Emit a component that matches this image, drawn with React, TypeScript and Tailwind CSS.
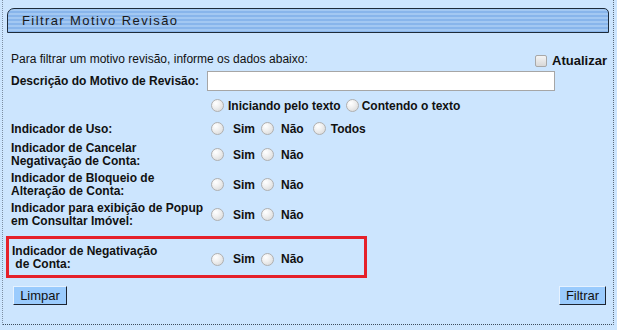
import React from "react";

function Radio({ className = "" }: { className?: string }) {
  return (
    <span
      className={
        "block w-[13px] h-[13px] rounded-full border border-[#b0b0b0] bg-[radial-gradient(circle_at_35%_30%,#ffffff_0%,#f0f0f0_40%,#d4d4d4_100%)] shrink-0 " +
        className
      }
    />
  );
}

function SimNao({ todos }: { todos?: boolean }) {
  return (
    <div className="flex items-center pl-[4px]">
      <Radio />
      <span className="ml-[9px] font-bold">Sim</span>
      <Radio className="ml-[6px]" />
      <span className="ml-[7px] font-bold">Não</span>
      {todos && (
        <>
          <Radio className="ml-[9px]" />
          <span className="ml-[5px] font-bold">Todos</span>
        </>
      )}
    </div>
  );
}

export default function App() {
  return (
    <div
      className="w-[617px] h-[330px] bg-[#cce5fe] text-[12px] text-[#111] overflow-hidden"
      style={{ fontFamily: '"Liberation Sans", Arial, sans-serif' }}
    >
      <div className="ml-[2px] w-[612px] h-[325px] border-l border-dotted border-l-[#7d8fa3] border-r border-r-[#5b6b7b] border-b border-b-[#3d4d5d]">
        <div className="pt-[8px] pl-[4px] pr-[4px]">
          <div className="h-[25px] border border-[#1d2b3a] rounded-tl-[7px] rounded-tr-[5px] bg-[repeating-linear-gradient(to_bottom,#a3c8f2_0px,#a3c8f2_2px,#88b5eb_2px,#88b5eb_4px)] flex items-center pl-[14px]">
            <span className="text-[13px] tracking-[1.4px] text-[#1a1a1a]">Filtrar Motivo Revisão</span>
          </div>
        </div>

        <div className="pl-[8px] pr-[6px]">
          <div className="mt-[18px] flex items-start justify-between h-[20px]">
            <span className="leading-[16px]">Para filtrar um motivo revisão, informe os dados abaixo:</span>
            <span className="mt-[2px] flex items-center leading-[16px]">
              <span className="block w-[12px] h-[12px] rounded-[2px] border border-[#a8a8a8] bg-[linear-gradient(#f4f4f4,#d8d8d8)]" />
              <span className="ml-[5px] font-bold text-[13px]">Atualizar</span>
            </span>
          </div>

          <div className="flex items-center h-[20px]">
            <div className="w-[196px] font-bold">Descrição do Motivo de Revisão:</div>
            <div className="w-[348px] h-[20px] border border-[#a6a6a6] bg-white" />
          </div>

          <div className="flex items-center h-[26px] pt-[3px]">
            <div className="w-[196px]" />
            <div className="flex items-center pl-[4px] font-bold">
              <Radio />
              <span className="ml-[4px]">Iniciando pelo texto</span>
              <Radio className="ml-[5px]" />
              <span className="ml-[3px]">Contendo o texto</span>
            </div>
          </div>

          <div className="flex items-center h-[22px] pt-[1px]">
            <div className="w-[196px] font-bold">Indicador de Uso:</div>
            <SimNao todos />
          </div>

          <div className="flex items-center h-[30px] pt-[1px]">
            <div className="w-[196px] font-bold leading-[13px]">
              Indicador de Cancelar
              <br />
              Negativação de Conta:
            </div>
            <SimNao />
          </div>

          <div className="flex items-center h-[31px]">
            <div className="w-[196px] font-bold leading-[13px]">
              Indicador de Bloqueio de
              <br />
              Alteração de Conta:
            </div>
            <SimNao />
          </div>

          <div className="flex items-center h-[29px]">
            <div className="w-[196px] font-bold leading-[13px]">
              Indicador para exibição de Popup
              <br />
              em Consultar Imóvel:
            </div>
            <SimNao />
          </div>
        </div>

        <div className="ml-[3px] mt-[7px] w-[361px] h-[42px] border-[3px] border-[#e5202a] flex items-center pl-[3px]">
          <div className="w-[195px] font-bold leading-[13px] pt-[1px]">
            Indicador de Negativação
            <br />
            &nbsp;de Conta:
          </div>
          <div className="pt-[4px]">
            <SimNao />
          </div>
        </div>

        <div className="mt-[8px] flex justify-between pl-[10px] pr-[7px]">
          <button className="w-[54px] h-[19px] bg-[#9acbfd] border border-t-[#e6f2ff] border-l-[#e6f2ff] border-r-[#1c2430] border-b-[#1c2430] text-[13px] leading-[17px] text-[#111]">
            Limpar
          </button>
          <button className="w-[47px] h-[19px] bg-[#9acbfd] border border-t-[#e6f2ff] border-l-[#e6f2ff] border-r-[#1c2430] border-b-[#1c2430] text-[13px] leading-[17px] text-[#111]">
            Filtrar
          </button>
        </div>
      </div>
    </div>
  );
}
